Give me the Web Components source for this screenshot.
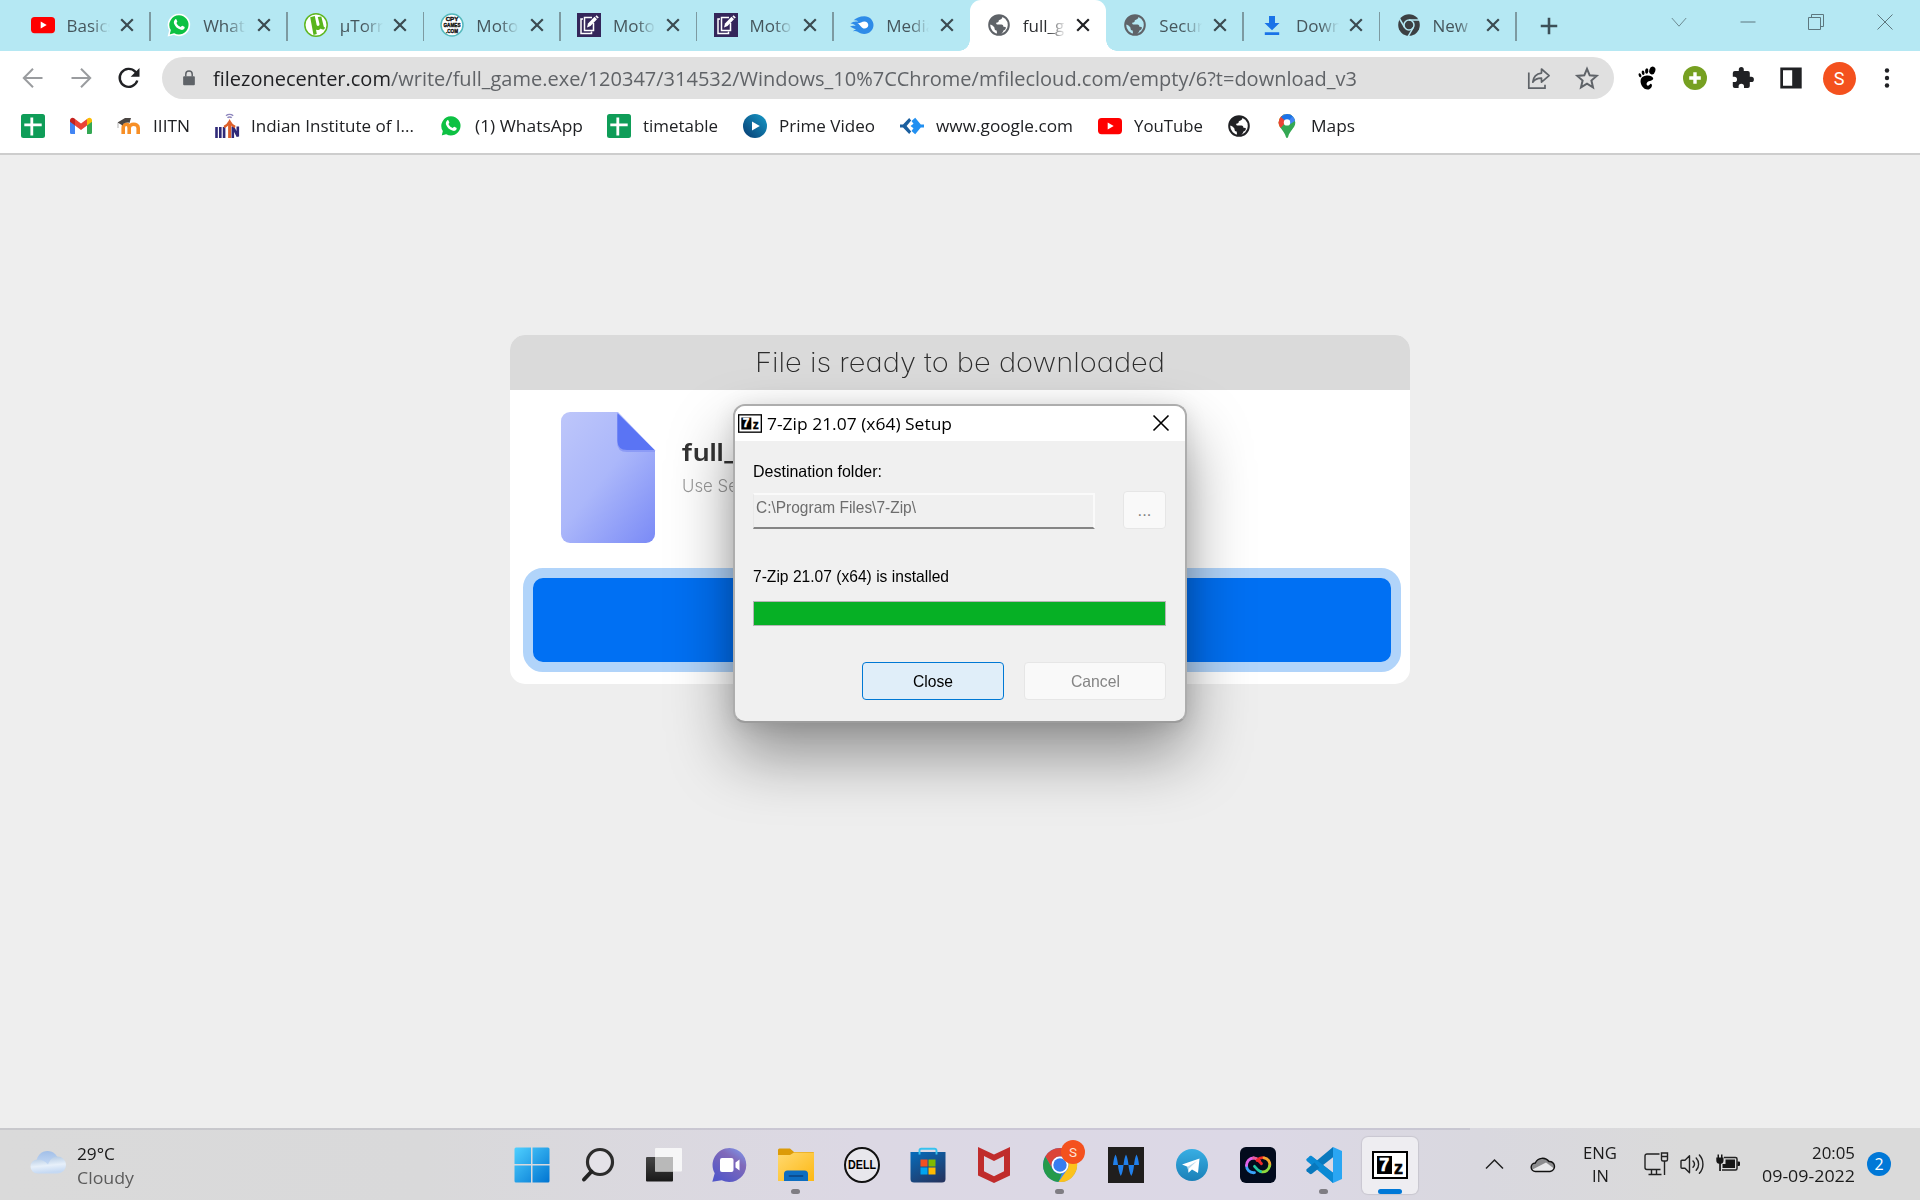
<!DOCTYPE html>
<html lang="en">
<head>
<meta charset="utf-8">
<title>full_game.exe</title>
<style>
html,body{margin:0;padding:0}
body{width:1920px;height:1200px;overflow:hidden;font-family:"Open Sans","Noto Sans",sans-serif;font-size:17px}
</style>
</head>
<body>
<desktop-screen></desktop-screen>
<script>
const globe = c => `<svg viewBox="0 0 24 24"><circle cx="12" cy="12" r="9.800" fill="var(--globe-land,#fff)" stroke="${c}" stroke-width="2"/><path d="M2.200 11.500C2.500 6.500 6.500 2.200 12 2.200l2.800.5c1 1.200.7 2.800-.8 3.600l-2.200 1c.2 1.700-.8 2.400-2.600 2.500-.3 1.400.6 1.700 2.300 1.700h3c1.400 0 1.800 1 1.900 2.200l2.300.4c.6 1.700-.6 3-2.200 3.500-.5 1.700-1.700 3.400-3.700 4.200l-2.600.1c-.3-1.800-.2-3-.6-4.300-1.800-.3-2-1.300-2.200-3.200-1-1.300-2.400-2.700-5.200-2.900z" fill="${c}"/></svg>`;
const youtube = `<svg viewBox="0 0 24 24"><rect x="0" y="4" width="24" height="16.200" rx="3.600" fill="#f00"/><path d="M9.700 8.600v7l6-3.500z" fill="#fff"/></svg>`;
const whatsapp = `<svg viewBox="0 0 24 24"><path d="M12 1.500A10.400 10.400 0 0 0 3 17.200L1.700 22.400l5.200-1.400A10.400 10.400 0 1 0 12 1.500z" fill="#0dc143" stroke="#fff" stroke-width="1.600"/><path d="M8.200 6.400c.5-.5 1.100-.3 1.300.2l.8 1.900c.2.500-.7 1.300-.9 1.600.9 1.900 2.300 3.200 4.300 4 .5-.2 1.100-1.500 1.600-1.300l2 1c.6.3.4 1.200.1 1.800-.6 1.100-2.100 1.600-3.400 1.200-3.500-.9-6-3.200-7-6.200-.5-1.700.2-3.300 1.200-4.200z" fill="#fff"/></svg>`;
const sheets = `<svg viewBox="0 0 24 24"><rect width="24" height="24" rx="2.500" fill="#0f9d58"/><path d="M9.400 3.500h2.800v5.900h8.500v2.800h-8.500v9.300H9.400v-9.300H3.300V9.400h6.100z" fill="#fff"/></svg>`;
const notes = `<svg viewBox="0 0 24 24"><rect width="24" height="24" fill="#34265a"/><g fill="none" stroke="#fff" stroke-width="1.500"><path d="M6 6H4v14.500h10.500v-2"/><path d="M15 4.500H7.500V17.500h9V10"/></g><path d="M11 10.500l-1 4 3.500-1.500L20 6.300l-2.500-2.500z" fill="#fff"/><path d="M19 2.800l2.200 2.200" stroke="#fff" stroke-width="1.700"/></svg>`;
const sevenZip = `<svg viewBox="0 0 36 28"><rect x="1" y="1" width="34" height="26" fill="#fff" stroke="#000" stroke-width="2"/><rect x="5" y="5" width="15" height="18" fill="#000"/><text x="12.300" y="20" text-anchor="middle" font-family="Liberation Sans,sans-serif" font-weight="bold" font-size="18" fill="#fff" stroke="#fff" stroke-width=".6">7</text><text x="26.500" y="22.500" text-anchor="middle" font-family="Liberation Sans,sans-serif" font-weight="bold" font-size="18" fill="#000" stroke="#000" stroke-width=".6">z</text></svg>`;
const ICONS = {
youtube, whatsapp, sheets, notes, sevenZip,
globeGrey: globe('#5f6368'), globeDark: globe('#202124'),
utorrent:`<svg viewBox="0 0 24 24"><circle cx="12" cy="12" r="11.200" fill="#fff" stroke="#5fb721" stroke-width="1.500"/><path d="M6.200 4.300l4.600-1.200 1.800 8.600c.5 2 3.300 1.300 2.900-.8l-1.700-6.800 3.500-.7 2.300 9.600c.2 1.200.8 1.500 1.600 1.400l-1 1.900c-1.300.5-2.700.2-3.500-.9-1 1.500-3.100 2-4.700 1l.8 4.600-3.300.9z" fill="#58b51c"/></svg>`,
cpy:`<svg viewBox="0 0 24 24"><circle cx="12" cy="12" r="11" fill="#fff" stroke="#56b9bd" stroke-width="1.500"/><g font-family="Liberation Sans,sans-serif" font-weight="bold" font-size="6.200" text-anchor="middle" fill="#111" stroke="#111" stroke-width=".4"><text x="12" y="8.200">CPY</text><text x="12" y="14" textLength="17" lengthAdjust="spacingAndGlyphs">GAMES</text><text x="12" y="20" textLength="12" lengthAdjust="spacingAndGlyphs">.COM</text></g></svg>`,
flame:`<svg viewBox="0 0 24 24"><path d="M14.500 3.200c5 0 9 3.900 9 8.900s-4 8.900-9.300 8.900c-5 0-5.900-2.700-9.200-2.900l-2.200.1c1-1 2-1.400 3.400-1.800-2.800-.7-4-2.300-6.200-2.700 2.100-1.300 3.600-1.100 5.700-.6-1-1.600-3.400-2.700-5.200-2.500C3.500 8 6.300 9 8.300 8.300 7 7.300 5.300 7 3.600 7.200 6.200 5 9.400 3.200 14.500 3.200z" fill="#2e8be8"/><path d="M7.500 10c2 .8 4-1.600 6.900-1.600 2.200 0 3.900 1.500 3.900 3.600s-1.700 3.500-3.800 3.500c-2.900 0-3.500-2.600-7-5.500z" fill="#fff"/></svg>`,
download:`<svg viewBox="0 0 24 24"><path d="M9 3h6v7h4.500L12 17.200 4.500 10H9zM4.800 19.200h14.400v2.700H4.800z" fill="#1a73e8"/></svg>`,
chromeGrey:`<svg viewBox="0 0 24 24"><circle cx="12" cy="12" r="10.800" fill="#3c4043"/><circle cx="12" cy="12" r="5" fill="none" stroke="#b5e8f3" stroke-width="1.500"/><path d="M12 7h10M7.700 14.500L2.700 6M16.300 14.500l-5 8.700" stroke="#b5e8f3" stroke-width="1.500"/></svg>`,
x:`<svg viewBox="0 0 24 24"><path d="M6.200 6.200l11.600 11.600M17.800 6.200L6.200 17.800" stroke="currentColor" stroke-width="2.200"/></svg>`,
plus:`<svg viewBox="0 0 24 24"><path d="M12 3v18M3 12h18" stroke="#3c4f57" stroke-width="2.800"/></svg>`,
winDown:`<svg viewBox="0 0 24 24"><path d="M4.800 8l7.200 8.200L19.200 8" fill="none" stroke="#6d8b92" stroke-width="1"/></svg>`,
winMin:`<svg viewBox="0 0 24 24"><path d="M4.500 12h15" stroke="#5d777e" stroke-width="1"/></svg>`,
winMax:`<svg viewBox="0 0 24 24"><path d="M4.500 7.500h12v12h-12zM7.500 7.500v-3h12v12h-3" fill="none" stroke="#5d777e" stroke-width="1"/></svg>`,
winX:`<svg viewBox="0 0 24 24"><path d="M4.500 4.500l15 15M19.500 4.500l-15 15" stroke="currentColor" stroke-width="var(--sw,1)"/></svg>`,
back:`<svg viewBox="0 0 24 24"><path d="M21.500 12H3M12 2.800L2.800 12l9.200 9.200" fill="none" stroke="#9a9c9f" stroke-width="2"/></svg>`,
forward:`<svg viewBox="0 0 24 24"><path d="M2.500 12H21M12 2.800l9.200 9.200-9.200 9.200" fill="none" stroke="#9a9c9f" stroke-width="2"/></svg>`,
reload:`<svg viewBox="0 0 24 24"><path d="M20.300 14.500A9 9 0 1 1 18.200 5.600l2 2" fill="none" stroke="#202124" stroke-width="2.400"/><path d="M22.500 2v8.800h-8.800z" fill="#202124"/></svg>`,
lock:`<svg viewBox="0 0 24 24"><path d="M5.500 9.500h13a1.300 1.300 0 0 1 1.300 1.300v9.400a1.300 1.300 0 0 1-1.300 1.300h-13a1.300 1.300 0 0 1-1.300-1.300v-9.400A1.300 1.300 0 0 1 5.500 9.500z" fill="#5f6368"/><path d="M7.700 10V6.900a4.300 4.300 0 0 1 8.600 0V10" fill="none" stroke="#5f6368" stroke-width="2"/></svg>`,
share:`<svg viewBox="0 0 24 24"><path d="M1.800 6.500v15.700H18v-3.500" fill="none" stroke="#5f6368" stroke-width="1.700"/><path d="M14.500 3l7.600 6.600-7.600 6.600v-4c-3.800-.1-6.500 1-8.700 4C6.300 11 9.200 7.700 14.500 7.100z" fill="none" stroke="#5f6368" stroke-width="1.700" stroke-linejoin="round"/></svg>`,
star:`<svg viewBox="0 0 24 24"><path d="M12 2.800l2.700 6.500 7 .6-5.300 4.600 1.600 6.800-6-3.600-6 3.600 1.600-6.800-5.300-4.600 7-.6z" fill="none" stroke="#5f6368" stroke-width="2"/></svg>`,
foot:`<svg viewBox="0 0 24 24"><g fill="#000"><ellipse cx="17.300" cy="4.500" rx="3" ry="4" transform="rotate(18 17.300 4.500)"/><ellipse cx="11.700" cy="5" rx="1.600" ry="2.700" transform="rotate(5 11.700 5)"/><ellipse cx="8.100" cy="6.700" rx="1.400" ry="2.300" transform="rotate(-10 8.100 6.700)"/><ellipse cx="5" cy="9.200" rx="1.300" ry="2.100" transform="rotate(-22 5 9.200)"/><path d="M16.200 10.200c-3.500-1.500-9.600-.3-10.500 3.500-.9 4.200 2.500 9.800 7 9.900 3.600 0 5.300-4.600 3.600-5.600-1.500-.8-1.600 1.900-3.400 1.700-1.500-.3-1.700-2-.8-3.100 1.700-2 6.300-1.600 6.100-4 0-1-1-2-2-2.400z"/></g></svg>`,
adder:`<svg viewBox="0 0 24 24"><circle cx="12" cy="12" r="12" fill="#76a021"/><path d="M12 6.200v11.600M6.200 12h11.600" stroke="#fff" stroke-width="3.400"/></svg>`,
puzzle:`<svg viewBox="0 0 24 24"><path d="M20.300 10.800h-1.500V6.900a2 2 0 0 0-2-2h-4V3.500a2.500 2.500 0 0 0-5 0v1.400h-4a2 2 0 0 0-2 2v3.800h1.500a2.700 2.700 0 0 1 0 5.400H1.800v3.900a2 2 0 0 0 2 2h3.800V20.500a2.700 2.700 0 0 1 5.400 0V22h3.800a2 2 0 0 0 2-2v-4h1.500a2.600 2.600 0 0 0 0-5.200z" fill="#202124"/></svg>`,
side:`<svg viewBox="0 0 24 24"><path d="M1.300 1.500h21.400v21H1.300zM4 4.200v15.600h9.200V4.200z" fill="#202124" fill-rule="evenodd"/></svg>`,
dots:`<svg viewBox="0 0 24 24"><g fill="#202124"><circle cx="12" cy="4.500" r="2.200"/><circle cx="12" cy="12" r="2.200"/><circle cx="12" cy="19.500" r="2.200"/></g></svg>`,
gmail:`<svg viewBox="0 0 24 24"><path d="M1 6v12.400c0 .9.700 1.600 1.600 1.600H6V11z" fill="#4285f4"/><path d="M23 6v12.400c0 .9-.7 1.600-1.600 1.600H18V11z" fill="#34a853"/><path d="M1 6.300C1 3.800 3.800 3.200 5.200 4.300L6 5v6.500L1 7.800z" fill="#c5221f"/><path d="M23 6.300c0-2.500-2.800-3.100-4.200-2L18 5v6.500l5-3.700z" fill="#fbbc04"/><path d="M6 5l6 4.600L18 5v6.500l-6 4.500-6-4.500z" fill="#ea4335"/></svg>`,
moodle:`<svg viewBox="0 0 24 24"><path d="M6.200 20v-6c0-5 6-5 6 0v6M12.200 20v-6c0-5 9-5 9 0v6" fill="none" stroke="#f78f26" stroke-width="3.600"/><path d="M.5 8.500l7.500-4.500L14 4l-1.500 5c-2-1-6.600-.5-6.800 2.400z" fill="#4b4643"/><path d="M1 9v5" stroke="#aaa" stroke-width=".9"/></svg>`,
iiitn:`<svg viewBox="0 0 24 24"><path d="M1.500 13v11M5.300 13v11M9.100 13v11M17.800 24V12.500l5 10V12.500" fill="none" stroke="#302a78" stroke-width="2.600"/><path d="M14.600 10v14" fill="none" stroke="#dd602a" stroke-width="3"/><path d="M9 13c3-.8 4-2.500 5.600-5.500 1.600 3 2.600 4.700 5.600 5.500" fill="none" stroke="#dd602a" stroke-width="2.400"/><path d="M11 1.800c2-1.700 5.200-1.700 7.200 0M12.500 3.800c1-1 3.200-1 4.200 0" fill="none" stroke="#8e87bd" stroke-width="1.500"/></svg>`,
prime:`<svg viewBox="0 0 24 24"><defs><linearGradient id="p" x1="1" x2="0" y2="1"><stop stop-color="#179bc9"/><stop offset="1" stop-color="#073a70"/></linearGradient></defs><circle cx="12" cy="12" r="12" fill="url(#p)"/><path d="M9 7.500v9l7.800-4.500z" fill="#fff"/></svg>`,
gcode:`<svg viewBox="0 0 24 24"><path d="M0 10.600h3L9.200 4l2 2.400L6.600 12l4.600 5.600-2 2.400L3 13.400H0z" fill="#1b5f9f"/><path d="M11.500 7l3.700-3.200 5.600 6.600H24v3.200h-3.200l-5.600 6.600L11.500 17l2-2.700-3-2.300 3-2.300z" fill="#2290f1"/></svg>`,
pin:`<svg viewBox="0 0 24 24"><defs><clipPath id="c"><path d="M12 0a8.300 8.300 0 0 1 8.300 8.400c0 5.600-5.500 7.700-7.300 14.800-.3 1.100-1.700 1.100-2 0C9.200 16.100 3.700 14 3.700 8.400A8.300 8.300 0 0 1 12 0z"/></clipPath></defs><g clip-path="url(#c)"><path d="M0 0h24v24H0z" fill="#34a853"/><path d="M3 15.500L18 0H0v20z" fill="#fbbc04"/><path d="M3 5l7 4-7 8z" fill="#ea4335"/><path d="M0 0h24l-3 6.200-6 4L5.500 3z" fill="#4285f4"/><path d="M3 0v9.500l3 2.500 6-7.500-6-3z" fill="#ea4335"/><path d="M5.700 2.700l6.300 5.700L18.600 1 12 0z" fill="#1a73e8"/></g><circle cx="12" cy="8.400" r="3.200" fill="#fff"/></svg>`,
weather:`<svg viewBox="0 0 36 24"><defs><linearGradient id="a" y2="1" x2="0"><stop stop-color="#a2bfe8"/><stop offset="1" stop-color="#d8e8fb"/></linearGradient><linearGradient id="b" y2="1" x2=".2"><stop stop-color="#a9c2de"/><stop offset=".6" stop-color="#e7f0fa"/><stop offset="1" stop-color="#c5d9f3"/></linearGradient></defs><circle cx="17.500" cy="12" r="11" fill="url(#a)"/><path d="M7.500 9.500c4 0 7.500 1.500 10.500 5 2-5 4.500-8 9.500-8a8.500 8.500 0 0 1 0 17h-20a7 7 0 0 1 0-14z" fill="url(#b)"/></svg>`,
start:`<svg viewBox="0 0 36 36"><defs><linearGradient id="w" x2="1" y2="1"><stop stop-color="#4fd0ff"/><stop offset="1" stop-color="#0074d1"/></linearGradient></defs><path d="M2 .5h15v16.500H.500V2A1.500 1.500 0 0 1 2 .5zM18.500.5H34A1.500 1.500 0 0 1 35.500 2v15h-17zM.5 18.500H17v17H2A1.500 1.500 0 0 1 .5 34zM18.500 18.500h17V34a1.500 1.500 0 0 1-1.500 1.500H18.500z" fill="url(#w)"/></svg>`,
search:`<svg viewBox="0 0 36 36"><circle cx="20" cy="15" r="12.500" fill="#e4e2e8" stroke="#2c2c2c" stroke-width="3.200"/><path d="M11.500 24.500L4 32.500" stroke="#222" stroke-width="4" stroke-linecap="round"/></svg>`,
tasks:`<svg viewBox="0 0 36 36"><defs><linearGradient id="t" y2="1" x2="0"><stop stop-color="#454545"/><stop offset="1" stop-color="#191919"/></linearGradient></defs><rect x="0" y="10" width="27" height="24.500" rx="1" fill="url(#t)"/><rect x="9" y="1" width="27" height="23.500" rx="1" fill="#f8f8f8" fill-opacity=".95"/><path d="M9 10h18v14.500H9z" fill="#b9b9b9"/></svg>`,
chat:`<svg viewBox="0 0 36 36"><defs><linearGradient id="h" x1="1" x2=".3" y2="1"><stop stop-color="#7da0f5"/><stop offset=".4" stop-color="#8069b9"/><stop offset="1" stop-color="#5357c8"/></linearGradient></defs><path d="M17.500 1a17 17 0 1 1-7.800 32.200L.3 34.800l2.400-8.500A17 17 0 0 1 17.500 1z" fill="url(#h)"/><rect x="8" y="11" width="13.500" height="14" rx="2" fill="#fff"/><path d="M23.500 15.500l4-3v11l-4-3z" fill="#fff"/></svg>`,
folder:`<svg viewBox="0 0 36 36"><defs><linearGradient id="f" x2="1" y2="1"><stop stop-color="#ffd970"/><stop offset="1" stop-color="#fdb813"/></linearGradient></defs><path d="M0 3a1.500 1.500 0 0 1 1.500-1.500H12l4 3.500h19a1 1 0 0 1 1 1v5H0z" fill="#dc9b08"/><path d="M0 8h12l4-2.500h20V34H0z" fill="url(#f)"/><path d="M6 34v-7a3.500 3.500 0 0 1 3.500-3.500h17A3.500 3.500 0 0 1 30 27v7z" fill="#0d6dc1"/><path d="M11.500 29h13" stroke="#0b4d90" stroke-width="1.800" stroke-linecap="round"/></svg>`,
dell:`<svg viewBox="0 0 36 36"><circle cx="18" cy="18" r="17" fill="#e8e7ec" stroke="#111" stroke-width="2"/><text x="18" y="22.300" text-anchor="middle" font-family="Liberation Sans,sans-serif" font-size="12" font-weight="bold" fill="#000" textLength="28" lengthAdjust="spacingAndGlyphs">DELL</text></svg>`,
store:`<svg viewBox="0 0 36 36"><defs><linearGradient id="s" x1=".2" x2=".8" y2="1"><stop stop-color="#0868b5"/><stop offset="1" stop-color="#243561"/></linearGradient></defs><path d="M.5 5h35v27a3.500 3.500 0 0 1-3.500 3.500H4A3.500 3.500 0 0 1 .5 32z" fill="url(#s)"/><path d="M9.500 7.500V3.500a1.800 1.800 0 0 1 1.800-1.800h13.400a1.800 1.800 0 0 1 1.800 1.800v4" fill="none" stroke="#37c2ef" stroke-width="1.900"/><path d="M10.500 12.500h7v7h-7z" fill="#f25022"/><path d="M18.500 12.500h7v7h-7z" fill="#7fba00"/><path d="M10.500 20.500h7v7h-7z" fill="#00a4ef"/><path d="M18.500 20.500h7v7h-7z" fill="#ffb900"/></svg>`,
mcafee:`<svg viewBox="0 0 36 36"><path d="M2 0l16 7.500L34 0v28.500L18 36 2 28.500zM8 9v15.300l10 4.900 10-4.900V9l-10 5z" fill="#c02c2c" fill-rule="evenodd"/></svg>`,
chrome:`<svg viewBox="0 0 36 36"><circle cx="18" cy="18" r="17" fill="#4285f4"/><path d="M18 1a17 17 0 0 1 14.800 8.500H18A8.500 8.500 0 0 0 10.600 22L3.300 9.500A17 17 0 0 1 18 1z" fill="#db4437"/><path d="M3.300 9.500l7.300 12.700A8.500 8.500 0 0 0 20 26.300L16.500 35A17 17 0 0 1 3.300 9.500z" fill="#249a4a"/><path d="M32.800 9.500A17 17 0 0 1 16.500 35l8.900-12.800A8.500 8.500 0 0 0 18 9.500z" fill="#fcc21b"/><circle cx="18" cy="18" r="8.400" fill="#fff"/><circle cx="18" cy="18" r="6.700" fill="#377df0"/></svg>`,
wave:`<svg viewBox="0 0 36 36"><path d="M0 0h36v36H0z" fill="#201e1d"/><path d="M5 18c.5-4.500 1-7.500 2.500-10.500C9 10.500 9.500 13.500 10 18zM15.500 18c.5-4.500 1-7.500 2.500-10.500 1.500 3 2 6 2.500 10.500zM26 18c.5-4.500 1-7.500 2.500-10.500C30 10.500 30.500 13.500 31 18zM10 18h5.500c-.4 4.500-1 8-2.700 11-1.700-3-2.400-6.500-2.800-11zM20.500 18H26c-.4 4.500-1 8-2.700 11-1.700-3-2.400-6.500-2.800-11z" fill="#2180eb"/></svg>`,
telegram:`<svg viewBox="0 0 36 36"><defs><linearGradient id="g" x2="0" y2="1"><stop stop-color="#38aee3"/><stop offset="1" stop-color="#1a80b8"/></linearGradient></defs><circle cx="18" cy="18" r="16" fill="url(#g)"/><path d="M8 17.500l17.500-6L24 26l-6-3.500-3.500 3.300-1-6z" fill="#fff"/><path d="M13.500 19.800L23 14l-8 7.500-.5 4.300z" fill="#b8d9ec"/></svg>`,
cloudcc:`<svg viewBox="0 0 36 36"><rect width="36" height="36" rx="6" fill="#020b1d"/><g fill="none" stroke-width="2.800" stroke-linecap="round"><path d="M14.500 25.700c-5 .5-8-3-8-7.200" stroke="#38a2f8"/><path d="M6.500 18.500c0-4 3-7.300 7-7.500" stroke="#df62e8"/><path d="M13.500 11c2.500-.1 4.400 1.300 6 3" stroke="#e85a9a"/><path d="M17 13.500c2-2.300 4.500-3.200 7-2.700" stroke="#f02929"/><path d="M24 10.800c4 .6 6.500 4.200 5.700 8" stroke="#f6a62d"/><path d="M29.700 18.800c-.8 4.200-4.500 7-9 5.800" stroke="#8fd93c"/><path d="M20.700 24.600c-2.300-.8-4-2.800-6.200-5.300" stroke="#23c8a2"/><path d="M19 14l2.500 2.800" stroke="#f02929"/></g></svg>`,
vscode:`<svg viewBox="0 0 36 36"><path d="M.7 11.800l3-2.600c.8-.5 1.500-.4 2.200.1L27 25.800V36L.8 13.900c-.7-.7-.7-1.500-.1-2.100z" fill="#0b8ad4"/><path d="M.7 24.200l3 2.600c.8.500 1.500.4 2.200-.1L27 10.200V0L.8 22.100c-.7.7-.7 1.500-.1 2.100z" fill="#0878bd"/><path d="M3 9.500l3-.1L27 25.800V36z" fill="#0b8ad4"/><path d="M27 0l9 4v28l-9 4z" fill="#2aa6f3"/></svg>`,
up:`<svg viewBox="0 0 24 24"><path d="M3 16.500L11.500 8l8.500 8.500" fill="none" stroke="#222" stroke-width="1.500"/></svg>`,
onedrive:`<svg viewBox="0 0 24 24"><path d="M4.500 19.500a4.200 4.200 0 0 1-.2-8.500A8 8 0 0 1 18 9.500a5 5 0 0 1 1 10z" fill="#8d8d8f"/><path d="M4.500 19.500a4 4 0 0 1-3-2L15 10.500l8 6c-.5 2-2 3-4 3z" fill="#e8e8ea"/><path d="M4.500 19.500a4.200 4.200 0 0 1-.2-8.500A8 8 0 0 1 18 9.500a5 5 0 0 1 1 10z" fill="none" stroke="#111" stroke-width="1.400"/></svg>`,
monitor:`<svg viewBox="0 0 24 24"><g fill="none" stroke="#222" stroke-width="1.400"><path d="M15.500 2H3a2 2 0 0 0-2 2v11.500a2 2 0 0 0 2 2h13.500M7.500 17.500V22M12.500 17.500V22M4.500 22.500h13"/><path d="M17.500 1h6v6.500a1.500 1.500 0 0 1-1.500 1.500h-3a1.500 1.500 0 0 1-1.500-1.500zM17.500 4.500h6M20.500 9v14"/></g></svg>`,
speaker:`<svg viewBox="0 0 24 24"><g fill="none" stroke="#222" stroke-width="1.400" stroke-linecap="round"><path d="M1 9.300a1 1 0 0 1 1-1h3l4.500-4.500v17L5 16.200H2a1 1 0 0 1-1-1z" stroke-linejoin="round"/><path d="M13 9c1.700 1.800 1.700 4.500 0 6.300M16.200 6c3.200 3.500 3.200 8.800 0 12.300M19.400 3c4.700 5.200 4.700 13.200 0 18.300"/></g></svg>`,
battery:`<svg viewBox="0 0 24 24"><path d="M8 5.500h11.500A1.500 1.500 0 0 1 21 7v9.500a1.500 1.500 0 0 1-1.500 1.500H6" fill="none" stroke="#222" stroke-width="1.500"/><path d="M9.500 7.500h9.500v8.500H6.500v-4h3zM21.500 9.500h1.500a1 1 0 0 1 1 1v2.500a1 1 0 0 1-1 1h-1.500z" fill="#161616"/><path d="M.3 5.500h7.200v3a3.300 3.300 0 0 1-2.600 3.300V19H3.200v-7.200A3.300 3.300 0 0 1 .3 8.500zM1.500 2.500h1.500v4H1.500zM5 2.500h1.500v4H5z" fill="#161616"/></svg>`,
file:`<svg viewBox="0 0 94 131"><defs><linearGradient id="d" x1=".1" x2="1" y2="1"><stop stop-color="#bcc5fa"/><stop offset=".45" stop-color="#abb7fa"/><stop offset="1" stop-color="#7a8af6"/></linearGradient></defs><path d="M9 0h48l37 38.500V122a9 9 0 0 1-9 9H9a9 9 0 0 1-9-9V9a9 9 0 0 1 9-9z" fill="url(#d)"/><path d="M56 2v28q0 10 10 10h28v-1.500z" fill="#8c9bf6"/><path d="M56.500 1v27.500q0 9.500 9.500 9.500h27.500z" fill="#5a74f4"/></svg>`
};

const define = (name, html, setup) => {
  const template = document.createElement('template');
  template.innerHTML = html;
  customElements.define(name, class extends HTMLElement {
    connectedCallback() {
      if (this.shadowRoot) return;
      this.attachShadow({mode: 'open'}).append(template.content.cloneNode(true));
      if (setup) setup(this, this.shadowRoot);
    }
  });
};

/* An SVG glyph: name, w and optional h */
define('ui-icon', `<style>:host{display:block;flex:none}svg{display:block;width:100%;height:100%;overflow:visible}</style>`, (el, root) => {
  const w = el.getAttribute('w') || 24, h = el.getAttribute('h') || w;
  el.style.width = w + 'px'; el.style.height = h + 'px';
  root.innerHTML += ICONS[el.getAttribute('name')];
});

/* One line of text condensed or stretched to a given width */
define('fit-text', `<style>:host{display:block;flex:none;white-space:nowrap}span{display:inline-block;transform-origin:0 50%}</style><span><slot></slot></span>`, (el, root) => {
  const w = +el.getAttribute('w'), s = root.querySelector('span');
  el.style.width = w + 'px';
  const n = s.getBoundingClientRect().width;
  if (n) s.style.transform = `scaleX(${w / n})`;
});

define('browser-tab', `<style>
:host{display:flex;align-items:center;box-sizing:border-box;width:136.600px;height:51px;padding:0 0 1px 17.200px;position:relative;color:#46565c;flex:none}
.t{width:44px;margin-left:12px;overflow:hidden;white-space:nowrap;-webkit-mask:linear-gradient(90deg,#000 55%,transparent 98%);mask:linear-gradient(90deg,#000 55%,transparent 98%)}
.x{margin-left:4.500px;color:#3c4b51}
:host([sep])::after{content:"";position:absolute;right:-1px;top:12px;width:1.500px;height:29px;background:#7d9aa1}
:host([active]){background:#fff;border-radius:11px 11px 0 0;color:#2c2e31}
:host([active]) .x{color:#202124}
:host([active])::before,:host([active])::after{content:"";position:absolute;bottom:0;width:11px;height:11px}
:host([active])::before{left:-11px;background:radial-gradient(circle at 0 0,transparent 10.500px,#fff 11px)}
:host([active])::after{right:-11px;background:radial-gradient(circle at 100% 0,transparent 10.500px,#fff 11px)}
ui-icon{--globe-land:#b5e8f3}:host([active]) ui-icon{--globe-land:#fff}
</style><slot name="icon"></slot><div class="t"><slot></slot></div><ui-icon class="x" name="x" w="24"></ui-icon>`, (el, root) => {
  const i = document.createElement('ui-icon');
  i.setAttribute('name', el.getAttribute('icon'));
  root.querySelector('slot').replaceWith(i);
});

define('tab-strip', `<style>
:host{display:flex;height:51px;background:#b5e8f3;padding-left:13.400px;align-items:center}
.plus{margin-left:22.500px}
.win{display:flex;margin-left:auto;gap:44.700px;padding:0 23px 8px 0;color:#5d777e}
</style>
<browser-tab sep icon="youtube">Basics</browser-tab><browser-tab sep icon="whatsapp">Whats</browser-tab><browser-tab sep icon="utorrent">µTorre</browser-tab><browser-tab sep icon="cpy">Moto</browser-tab><browser-tab sep icon="notes">Moto</browser-tab><browser-tab sep icon="notes">Moto</browser-tab><browser-tab icon="flame">Media</browser-tab><browser-tab active icon="globeGrey">full_g</browser-tab><browser-tab sep icon="globeGrey">Secur</browser-tab><browser-tab sep icon="download">Down</browser-tab><browser-tab sep icon="chromeGrey">New</browser-tab>
<ui-icon class="plus" name="plus" w="22"></ui-icon>
<div class="win"><ui-icon name="winDown"></ui-icon><ui-icon name="winMin"></ui-icon><ui-icon name="winMax"></ui-icon><ui-icon name="winX"></ui-icon></div>`);

define('address-bar', `<style>
:host{display:flex;align-items:center;height:54px;background:#fff;padding-left:21px}
.nav{display:flex;gap:24px;align-items:center;width:141px}
.pill{display:flex;align-items:center;width:1452px;height:42px;border-radius:21px;background:#e0e0e0;box-sizing:border-box;padding:0 15px 0 15px;font-size:20.500px;color:#606367}
.pill b{font-weight:400;color:#202124}
fit-text{margin:-1px 0 0 12px}
.acts{display:flex;gap:24px;margin-left:auto}
.ext{display:flex;align-items:center;gap:24px;margin-left:21px}
.ava{width:33px;height:33px;border-radius:50%;background:#f4511e;color:#fff;display:grid;place-items:center;font:18px Roboto,sans-serif;margin:0 -4.500px}
</style>
<div class="nav"><ui-icon name="back"></ui-icon><ui-icon name="forward"></ui-icon><ui-icon name="reload"></ui-icon></div>
<div class="pill"><ui-icon name="lock" w="18" h="20" style="margin-left:3px;margin-right:3px"></ui-icon><fit-text w="1144"><b>filezonecenter.com</b>/write/full_game.exe/120347/314532/Windows_10%7CChrome/mfilecloud.com/empty/6?t=download_v3</fit-text><div class="acts"><ui-icon name="share"></ui-icon><ui-icon name="star"></ui-icon></div></div>
<div class="ext"><ui-icon name="foot"></ui-icon><ui-icon name="adder"></ui-icon><ui-icon name="puzzle"></ui-icon><ui-icon name="side"></ui-icon><div class="ava">S</div><ui-icon name="dots"></ui-icon></div>`);

define('book-mark', `<style>:host{display:flex;align-items:center;gap:12px;flex:none}::slotted(*){margin-top:-2px}</style><slot></slot>`, (el, root) => {
  const i = document.createElement('ui-icon');
  i.setAttribute('name', el.getAttribute('icon'));
  root.querySelector('slot').before(i);
});

define('bookmarks-bar', `<style>
:host{display:flex;align-items:center;gap:24px;background:#fff;border-bottom:2px solid #cdcdcd;padding:0 0 6px 21px;color:#202124;box-sizing:border-box;height:50px}
fit-text{margin-right:.8px}
</style>
<book-mark icon="sheets"></book-mark><book-mark icon="gmail"></book-mark><book-mark icon="moodle"><fit-text w="37">IIITN</fit-text></book-mark><book-mark icon="iiitn"><fit-text w="163">Indian Institute of I...</fit-text></book-mark><book-mark icon="whatsapp"><fit-text w="108">(1) WhatsApp</fit-text></book-mark><book-mark icon="sheets"><fit-text w="75">timetable</fit-text></book-mark><book-mark icon="prime"><fit-text w="96">Prime Video</fit-text></book-mark><book-mark icon="gcode"><fit-text w="137">www.google.com</fit-text></book-mark><book-mark icon="youtube"><fit-text w="69">YouTube</fit-text></book-mark><book-mark icon="globeDark" style="margin-left:-1px"></book-mark><book-mark icon="pin"><fit-text w="44">Maps</fit-text></book-mark>`);

define('download-card', `<style>
:host{display:flex;flex-direction:column;width:900px;height:349px;border-radius:15px;background:#fff;overflow:hidden;font-family:Inter,sans-serif}
header{display:flex;justify-content:center;align-items:center;height:55px;background:#dadada;color:#2c2c2c;font-size:27px;font-weight:250;font-feature-settings:"cv11"}
.row{display:flex;height:131px;padding:22px 0 0 51px}
.info{margin:24px 0 0 27px;display:flex;flex-direction:column}
.n{font-size:24px;font-weight:600;color:#333;line-height:33px}
.s{font-size:17.500px;font-weight:300;color:#999;line-height:34px}
.btn{margin:25px 0 0 13px;width:878px;height:104px;box-sizing:border-box;border:10px solid #b1d4fa;border-radius:20px;background:#0070f3}
</style>
<header><fit-text w="410">File is ready to be downloaded</fit-text></header>
<div class="row"><ui-icon name="file" w="94" h="131"></ui-icon><div class="info"><fit-text class="n" w="55">full_</fit-text><fit-text class="s" w="56">Use Se</fit-text></div></div>
<div class="btn"></div>`);

define('setup-button', `<style>
:host{display:flex;align-items:center;justify-content:center;box-sizing:border-box;height:38px;border:1px solid #e6e6e6;border-radius:4px;background:#f9f9f9;color:#848484}
:host([primary]){background:#e0eef9;border-color:#0078d4;color:#000}
</style><slot></slot>`);

define('setup-dialog', `<style>
:host{display:flex;flex-direction:column;box-sizing:border-box;border:2px solid #adadad;border-bottom-color:#9c9c9c;border-radius:12px;background:#f0f0f0;overflow:hidden;box-shadow:0 32px 64px rgba(0,0,0,.4),0 2px 21px rgba(0,0,0,.1);font:16.500px "Liberation Sans",sans-serif;color:#000}
header{display:flex;align-items:center;height:35px;background:#fff;padding:0 15px 0 3px;font-family:"Open Sans",sans-serif;font-size:17px}
header fit-text{margin:-1px 0 0 5px}header ui-icon:last-child{margin:-2px -3px 0 auto;--sw:1.600}
main{padding:20px 19px 0 18px;display:flex;flex-direction:column}
.line{line-height:20px}
.row{display:flex;justify-content:space-between;margin-top:10px}
.in{width:342px;height:36px;margin-top:2px;box-sizing:border-box;border:1px solid #e8e8e8;border-top:2px solid #fafafa;border-right:2px solid #fafafa;border-bottom:2px solid #858585;padding:0 0 0 2px;color:#6d6d6d;line-height:25px}
.bar{height:25px;box-sizing:border-box;border:1px solid #b5b5b5;background:#06b025;margin-top:15px}
.btns{display:flex;justify-content:flex-end;gap:20px;margin-top:36px}
</style>
<header><ui-icon name="sevenZip" w="24" h="19"></ui-icon><fit-text w="185">7-Zip 21.07 (x64) Setup</fit-text><ui-icon name="winX" style="color:#000"></ui-icon></header>
<main><fit-text class="line" w="129">Destination folder:</fit-text>
<div class="row"><div class="in"><fit-text w="160">C:\\Program Files\\7-Zip\\</fit-text></div><setup-button style="width:43px">...</setup-button></div>
<fit-text class="line" w="196" style="margin-top:37px">7-Zip 21.07 (x64) is installed</fit-text>
<div class="bar"></div>
<div class="btns"><setup-button primary style="width:142px"><fit-text w="40">Close</fit-text></setup-button><setup-button style="width:142px"><fit-text w="49">Cancel</fit-text></setup-button></div></main>`);

define('task-item', `<style>
:host{display:flex;width:66px;height:73px;align-items:center;justify-content:center;position:relative;flex:none}
:host([running])::after{content:"";position:absolute;bottom:7px;width:9px;height:5px;border-radius:3px;background:#7f7d83}
:host([active])::before{content:"";position:absolute;inset:9px 5px 7px;background:#eeedf1;border-radius:6px;box-shadow:0 0 1px 1px rgba(0,0,0,.08)}
:host([active])::after{content:"";position:absolute;bottom:7px;width:24px;height:5px;border-radius:3px;background:#0078d7}
ui-icon{position:relative}
.b{position:absolute;left:34.500px;top:11.500px;width:24px;height:24px;border-radius:50%;background:#f4511e;color:#fde2d8;display:grid;place-items:center;font:13.500px Roboto,sans-serif}
</style>`, (el, root) => {
  root.innerHTML += `<ui-icon name="${el.getAttribute('icon')}" w="36" h="${el.getAttribute('h') || 36}"></ui-icon>`;
  if (el.hasAttribute('badge')) root.innerHTML += `<span class="b">${el.getAttribute('badge')}</span>`;
});

define('task-bar', `<style>
:host{display:flex;height:72px;background:linear-gradient(90deg,#dadada 0,#d9d9da 22%,#dcd8e4 45%,#dcd8e6 65%,#d9d8df 77%,#dadada 88%);position:relative}
:host::before{content:"";position:absolute;left:0;top:0;width:1470px;height:2px;background:rgba(110,110,135,.17)}
.w{display:flex;width:498.500px;box-sizing:border-box;padding:13.500px 0 0 30px;gap:10.500px}
.w ui-icon{margin-top:8.500px}
.w div{line-height:24px;color:#1b1b1b}.w div :last-child{color:#5b5b5b}
.apps{display:flex}
.tray{display:flex;margin-left:auto;align-items:center;padding-right:29px;color:#1b1b1b}
.col{display:flex;flex-direction:column;line-height:23px}
.n{display:grid;place-items:center;width:24px;height:24px;border-radius:50%;background:#0078d7;color:#fff;font-size:16px;margin-left:12px}
</style>
<div class="w"><ui-icon name="weather" w="36" h="24"></ui-icon><div><fit-text w="38">29°C</fit-text><fit-text w="57">Cloudy</fit-text></div></div>
<div class="apps"><task-item icon="start"></task-item><task-item icon="search"></task-item><task-item icon="tasks"></task-item><task-item icon="chat"></task-item><task-item icon="folder" running></task-item><task-item icon="dell"></task-item><task-item icon="store"></task-item><task-item icon="mcafee"></task-item><task-item icon="chrome" running badge="S"></task-item><task-item icon="wave"></task-item><task-item icon="telegram"></task-item><task-item icon="cloudcc"></task-item><task-item icon="vscode" running></task-item><task-item icon="sevenZip" h="28" active></task-item></div>
<div class="tray"><ui-icon name="up"></ui-icon><ui-icon name="onedrive" style="margin-left:24px"></ui-icon>
<div class="col" style="align-items:center;margin-left:28.500px"><fit-text w="34">ENG</fit-text><fit-text w="17">IN</fit-text></div>
<ui-icon name="monitor" style="margin-left:27px"></ui-icon><ui-icon name="speaker" style="margin-left:12px"></ui-icon><ui-icon name="battery" style="margin-left:12px"></ui-icon>
<div class="col" style="align-items:flex-end;margin-left:22px"><fit-text w="43">20:05</fit-text><fit-text w="93">09-09-2022</fit-text></div><span class="n">2</span></div>`);

define('desktop-screen', `<style>
:host{display:flex;flex-direction:column;width:1920px;height:1200px;background:#eee;position:relative;overflow:hidden}
main{flex:1;display:flex;justify-content:center;align-items:flex-start;padding-top:180px}
setup-dialog{position:absolute;left:733px;top:404px;width:454px;height:319px}
</style>
<tab-strip></tab-strip><address-bar></address-bar><bookmarks-bar></bookmarks-bar>
<main><download-card></download-card></main>
<task-bar></task-bar><setup-dialog></setup-dialog>`);
</script>
</body>
</html>
